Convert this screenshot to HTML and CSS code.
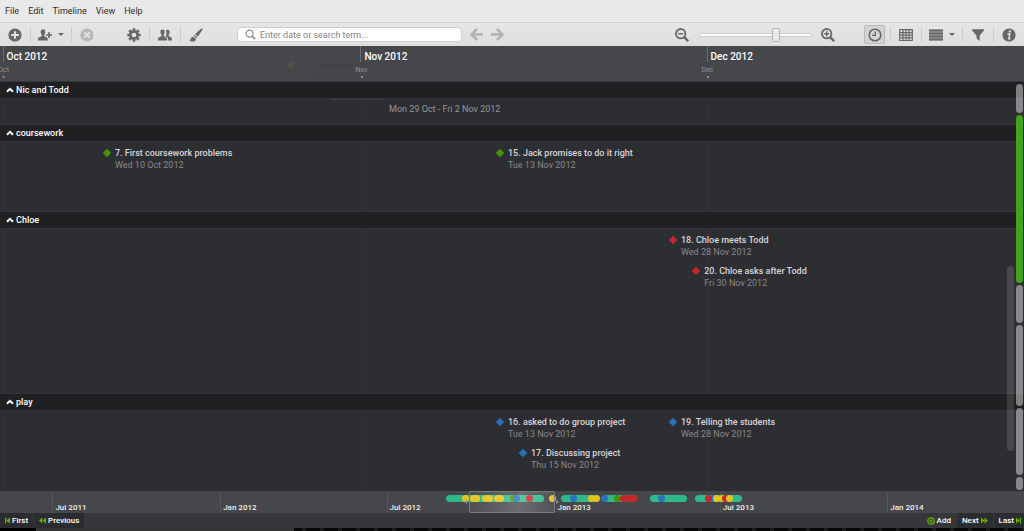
FILE: index.html
```html
<!DOCTYPE html>
<html lang="en">
<head>
<meta charset="utf-8">
<title>Timeline</title>
<link rel="stylesheet" href="styles.css">
</head>
<body>
<div class="app">
  <nav class="menubar">
    <button class="menu">File</button>
    <button class="menu">Edit</button>
    <button class="menu">Timeline</button>
    <button class="menu">View</button>
    <button class="menu">Help</button>
  </nav>

  <div class="toolbar">
    <div class="tools">
      <button class="tool" aria-label="Add event"><svg class="icon" viewBox="0 0 14 14"><circle cx="7" cy="7" r="6.6" fill="currentColor"/><path d="M7 3.2v7.6M3.2 7h7.6" stroke="#e4e4e4" stroke-width="1.9"/></svg></button>
      <button class="tool tool-wide" aria-label="Add person"><svg class="icon" viewBox="0 0 14 14"><path d="M5 1.2C3.3 1.2 2.6 2.4 2.7 4c.1 1.500.6 2.300 1.100 2.900v1.200L.9 9.400C.2 9.800 0 10.500 0 12.600h9.800c0-2.100-.1-2.800-.8-3.200L6.200 8.100V6.900C6.800 6.300 7.200 5.500 7.300 4 7.400 2.400 6.700 1.200 5 1.200z" fill="currentColor"/><path d="M11 4v6M8 7h6" stroke="currentColor" stroke-width="1.600"/></svg><span class="caret"></span></button>
      <button class="tool tool-off" aria-label="Delete" disabled><svg class="icon" viewBox="0 0 14 14"><circle cx="7" cy="7" r="6.600" fill="currentColor"/><path d="M4.300 4.300l5.400 5.400M9.700 4.300L4.300 9.700" stroke="#e6e6e6" stroke-width="1.700"/></svg></button>
    </div>
    <div class="tools">
      <button class="tool" aria-label="Settings"><svg class="icon" viewBox="0 0 14 14"><circle cx="7" cy="7" r="3.700" fill="none" stroke="currentColor" stroke-width="2.800"/><path d="M7 .3v2.400M7 11.300v2.400M.3 7h2.400M11.300 7h2.400M2.260 2.260l1.700 1.700M10.040 10.040l1.700 1.700M2.260 11.740l1.700-1.700M10.040 3.960l1.700-1.700" stroke="currentColor" stroke-width="2.600"/></svg></button>
      <button class="tool" aria-label="People"><svg class="icon" viewBox="0 0 14 14"><path d="M9.600 1.800c1.500 0 2.200 1 2.100 2.500-.1 1.300-.5 2-1 2.500v1.200l2.200 1.200c.8.400 1.100 1 1.100 3.200h-3.800c0-1.900-.4-2.900-1.400-3.400L7.600 8.300C8.300 7.200 8.500 5.900 8.300 4.300 8.200 3.400 8 2.700 7.600 2.300c.5-.4 1.200-.5 2-.5z" fill="currentColor"/><path d="M4.500 1.400C3 1.400 2.300 2.500 2.400 4c.1 1.400.5 2.200 1 2.800v1.300L.9 9.400C.2 9.800 0 10.500 0 12.600h9.100c0-2.100-.1-2.800-.8-3.200L5.700 8.100V6.800c.5-.6.900-1.400 1-2.800.1-1.500-.7-2.600-2.200-2.600z" fill="currentColor"/></svg></button>
      <button class="tool" aria-label="Appearance"><svg class="icon" viewBox="0 0 14 14"><path d="M12.300.6c.9-.4 1.500.3 1.100 1.100L9 8.600 6 6.300zM5.300 7l3 2.300-.7 1-2.800-2.200zM4.200 8.700l2.900 2.200c-.4 1.700-1.500 2.600-3.300 2.600-1.500 0-2.700-.4-3.600-1.300 1.200-.2 1.500-.7 1.700-1.600.3-1.200 1.100-1.900 2.300-1.900z" fill="currentColor"/></svg></button>
    </div>
    <label class="search">
      <svg class="search-icon" viewBox="0 0 12 12"><circle cx="5" cy="5" r="3.800" fill="none" stroke="#8c8c8c" stroke-width="1.400"/><path d="M7.800 7.800l3.200 3.200" stroke="#8c8c8c" stroke-width="1.900"/></svg>
      <input class="search-input" type="text" placeholder="Enter date or search term..." aria-label="Search">
    </label>
    <div class="history">
      <button class="arrow" aria-label="Back"><svg class="icon-sm" viewBox="0 0 13 13"><path d="M7 1L1.500 6.500 7 12M2 6.500h11" fill="none" stroke="currentColor" stroke-width="2.500"/></svg></button>
      <button class="arrow" aria-label="Forward"><svg class="icon-sm" viewBox="0 0 13 13"><path d="M6 1l5.500 5.500L6 12M11 6.500H0" fill="none" stroke="currentColor" stroke-width="2.500"/></svg></button>
    </div>
    <div class="zoom">
      <button class="zoom-btn" aria-label="Zoom out"><svg class="icon" viewBox="0 0 14 14"><circle cx="5.700" cy="5.700" r="4.700" fill="none" stroke="currentColor" stroke-width="1.800"/><path d="M3.200 5.700h5" stroke="currentColor" stroke-width="1.500"/><path d="M9.200 9.200l4 4" stroke="currentColor" stroke-width="2.400"/></svg></button>
      <input class="slider" type="range" min="0" max="100" value="70" aria-label="Zoom level">
      <button class="zoom-btn" aria-label="Zoom in"><svg class="icon" viewBox="0 0 14 14"><circle cx="5.700" cy="5.700" r="4.700" fill="none" stroke="currentColor" stroke-width="1.800"/><path d="M3.200 5.700h5M5.700 3.200v5" stroke="currentColor" stroke-width="1.500"/><path d="M9.200 9.200l4 4" stroke="currentColor" stroke-width="2.400"/></svg></button>
    </div>
    <div class="views">
      <div class="view-cell"><button class="view-on" aria-label="Timeline view" aria-pressed="true"><svg class="icon" viewBox="0 0 14 14"><circle cx="7" cy="7" r="5.800" fill="none" stroke="currentColor" stroke-width="1.600"/><path d="M7.300 3.600v3.800H4" fill="none" stroke="currentColor" stroke-width="1.300"/></svg></button></div>
      <button class="tool" aria-label="Table view"><svg class="icon" viewBox="0 0 14 14"><path d="M.7 1.700h12.600v10.800H.7zM.7 4.600h12.600M.7 7.200h12.600M.7 9.900h12.600M4 2v10.500M7 2v10.500M10 2v10.500" fill="none" stroke="currentColor" stroke-width="1.200"/></svg></button>
      <button class="tool tool-wide" aria-label="Row density"><svg class="icon" viewBox="0 0 14 14"><path d="M0 1.500h14v11H0z" fill="#a4a4a4"/><path d="M0 2.500h14M0 5.500h14M0 8.500h14M0 11.500h14" stroke="currentColor" stroke-width="2"/></svg><span class="caret"></span></button>
      <button class="tool" aria-label="Filter"><svg class="icon" viewBox="0 0 14 14"><path d="M1 1.300h12v1.300L8.700 7.400v5.500L5.500 10.300V7.400L1 2.600z" fill="currentColor"/></svg></button>
      <button class="tool" aria-label="Information"><svg class="icon" viewBox="0 0 14 14"><circle cx="7" cy="7" r="6.600" fill="currentColor"/><circle cx="7.900" cy="3.500" r="1.150" fill="#e4e4e4"/><path d="M5.500 6h2.300l-1 4.700h1.500" fill="none" stroke="#e4e4e4" stroke-width="1.400"/></svg></button>
    </div>
  </div>

  <header class="scale">
    <div class="mark" style="left:0.25%"><span class="mark-title">Oct 2012</span><span class="tick">Oct</span></div>
    <div class="mark" style="left:35.2%"><span class="mark-title">Nov 2012</span><span class="tick">Nov</span></div>
    <div class="mark" style="left:69%"><span class="mark-title">Dec 2012</span><span class="tick">Dec</span></div>
    <div class="event faded" style="left:28.03%"><i class="gem yellow"></i><span class="name">12. announcement</span><span class="date">Fri 26 Oct 2012</span></div>
  </header>

  <main class="lanes">
    <div class="grid-line" style="left:0.3%"></div>
    <div class="grid-line" style="left:35.25%"></div>
    <div class="grid-line" style="left:69.04%"></div>

    <section class="lane lane-1">
      <button class="lane-head"><svg class="chevron" viewBox="0 0 8 6"><path d="M1 4.800L4 1.900l3 2.900" fill="none" stroke="#fff" stroke-width="1.900"/></svg>Nic and Todd</button>
      <div class="canvas">
        <span class="span-bar"></span>
        <div class="span-date">Mon 29 Oct - Fri 2 Nov 2012</div>
      </div>
    </section>
    <section class="lane lane-2">
      <button class="lane-head"><svg class="chevron" viewBox="0 0 8 6"><path d="M1 4.800L4 1.900l3 2.900" fill="none" stroke="#fff" stroke-width="1.900"/></svg>coursework</button>
      <div class="canvas">
        <div class="event" style="left:10.05%"><i class="gem green"></i><span class="name">7. First coursework problems</span><span class="date">Wed 10 Oct 2012</span></div>
        <div class="event" style="left:48.43%"><i class="gem green"></i><span class="name">15. Jack promises to do it right</span><span class="date">Tue 13 Nov 2012</span></div>
      </div>
    </section>
    <section class="lane lane-3">
      <button class="lane-head"><svg class="chevron" viewBox="0 0 8 6"><path d="M1 4.800L4 1.900l3 2.900" fill="none" stroke="#fff" stroke-width="1.900"/></svg>Chloe</button>
      <div class="canvas">
        <div class="event" style="left:65.33%"><i class="gem red"></i><span class="name">18. Chloe meets Todd</span><span class="date">Wed 28 Nov 2012</span></div>
        <div class="event row-2" style="left:67.6%"><i class="gem red"></i><span class="name">20. Chloe asks after Todd</span><span class="date">Fri 30 Nov 2012</span></div>
      </div>
    </section>
    <section class="lane lane-4">
      <button class="lane-head"><svg class="chevron" viewBox="0 0 8 6"><path d="M1 4.800L4 1.900l3 2.900" fill="none" stroke="#fff" stroke-width="1.900"/></svg>play</button>
      <div class="canvas">
        <div class="event" style="left:48.43%"><i class="gem blue"></i><span class="name">16. asked to do group project</span><span class="date">Tue 13 Nov 2012</span></div>
        <div class="event" style="left:65.33%"><i class="gem blue"></i><span class="name">19. Telling the students</span><span class="date">Wed 28 Nov 2012</span></div>
        <div class="event row-2" style="left:50.68%"><i class="gem blue"></i><span class="name">17. Discussing project</span><span class="date">Thu 15 Nov 2012</span></div>
      </div>
    </section>

    <div class="scroll-thumb"></div>
    <div class="lane-map">
      <i class="seg" style="flex-grow:29"></i>
      <i class="seg seg-on" style="flex-grow:168"></i>
      <i class="seg" style="flex-grow:38"></i>
      <i class="seg" style="flex-grow:81"></i>
      <i class="seg" style="flex-grow:67"></i>
      <i class="seg" style="flex-grow:13"></i>
    </div>
  </main>

  <div class="overview">
    <div class="period" style="left:5.12%">Jul 2011</div>
    <div class="period" style="left:21.5%">Jan 2012</div>
    <div class="period" style="left:37.75%">Jul 2012</div>
    <div class="period" style="left:54.15%">Jan 2013</div>
    <div class="period" style="left:70.3%">Jul 2013</div>
    <div class="period" style="left:86.65%">Jan 2014</div>

    <i class="bar" style="left:43.55%;width:9.6%"></i>
    <i class="bar" style="left:54.8%;width:3.6%"></i>
    <i class="bar" style="left:59%;width:3%"></i>
    <i class="bar" style="left:63.48%;width:3.65%"></i>
    <i class="bar" style="left:67.85%;width:4.6%"></i>
    <i class="dot yellow" style="left:45.4%"></i>
    <i class="dot yellow" style="left:46.2%"></i>
    <i class="dot yellow" style="left:46.45%"></i>
    <i class="dot yellow" style="left:47.4%"></i>
    <i class="dot yellow" style="left:47.8%"></i>
    <i class="dot yellow" style="left:48.5%"></i>
    <i class="dot yellow" style="left:48.85%"></i>
    <i class="dot green" style="left:50.05%"></i>
    <i class="dot blue" style="left:50.39%"></i>
    <i class="dot red" style="left:51.66%"></i>
    <i class="dot yellow" style="left:53.95%"></i>
    <i class="dot blue" style="left:55.96%"></i>
    <i class="dot yellow" style="left:57.75%"></i>
    <i class="dot yellow" style="left:58.2%"></i>
    <i class="dot blue" style="left:59.03%"></i>
    <i class="dot green" style="left:60.3%"></i>
    <i class="dot red" style="left:60.85%"></i>
    <i class="dot red" style="left:61.2%"></i>
    <i class="dot red" style="left:61.6%"></i>
    <i class="dot red" style="left:61.95%"></i>
    <i class="dot blue" style="left:64.55%"></i>
    <i class="dot blue" style="left:69.5%"></i>
    <i class="dot red" style="left:69.1%"></i>
    <i class="dot yellow" style="left:70.55%"></i>
    <i class="dot yellow" style="left:69.9%"></i>
    <i class="dot red" style="left:70.8%"></i>
    <i class="dot yellow" style="left:71.15%"></i>
    <div class="viewport" style="left:45.8%;width:8.4%"></div>
    <i class="grip grip-left" style="left:45.3%"></i>
    <i class="grip grip-right" style="left:54.3%"></i>
  </div>

  <footer class="footer">
    <button class="nav-btn"><svg class="nav-icon nav-icon-end" viewBox="0 0 5 7"><path d="M0 .5h1.300v6H0zM5 .5v6L1.300 3.500z" fill="#62b000"/></svg>First</button>
    <button class="nav-btn"><svg class="nav-icon" viewBox="0 0 7 7"><path d="M3.300.5v6L0 3.500zM7 .5v6L3.500 3.500z" fill="#62b000"/></svg>Previous</button>
    <button class="nav-btn add"><svg class="add-icon" viewBox="0 0 8 8"><circle cx="4" cy="4" r="3.200" fill="none" stroke="#62b000" stroke-width="1.300"/><path d="M4 2.200v3.600M2.200 4h3.600" stroke="#62b000" stroke-width="1"/></svg>Add</button>
    <button class="nav-btn">Next<svg class="nav-icon" viewBox="0 0 7 7"><path d="M0 .5v6l3.500-3zM3.500.5v6L7 3.500z" fill="#62b000"/></svg></button>
    <button class="nav-btn last">Last<svg class="nav-icon nav-icon-end" viewBox="0 0 5 7"><path d="M0 .5v6l3.700-3zM3.700.5H5v6H3.700z" fill="#62b000"/></svg></button>
  </footer>
  <div class="edge"></div>
</div>
</body>
</html>
```

FILE: styles.css
```css
* { box-sizing: border-box; }

body {
  margin: 0;
  font-family: Roboto, "Liberation Sans", sans-serif;
  font-size: 9px;
  color: #e6e6e6;
  background: #2d2e32;
}

button {
  margin: 0;
  padding: 0;
  border: 0;
  background: none;
  color: inherit;
  font: inherit;
}

svg { display: block; flex: none; }

.app {
  display: flex;
  flex-direction: column;
  min-height: 100vh;
  overflow: hidden;
}

/* Menu bar */
.menubar {
  display: flex;
  gap: 9px;
  height: 22px;
  padding: 0 5px;
  background: #e9e9e9;
  color: #2c2c2c;
}
.menu { line-height: 21px; }

/* Toolbar */
.toolbar {
  display: flex;
  align-items: center;
  height: 24px;
  border-top: 1px solid #d0d0d0;
  background: linear-gradient(#e6e6e6, #dedede);
  color: #686868;
}
.tools { display: flex; align-items: center; margin-right: 17px; }
.tool {
  display: flex;
  align-items: center;
  justify-content: center;
  gap: 6px;
  width: 30px;
  height: 15px;
}
.tool + .tool, .view-cell + .tool { width: 31px; border-left: 1px solid #c3ced3; }
.tool-off { color: #b9b9b9; }
.icon { width: 14px; height: 14px; }
.icon-sm { width: 13px; height: 13px; }
.caret {
  border: 3px solid transparent;
  border-top-color: #5d6870;
  border-bottom: 0;
}
.tool.tool-wide { width: 41px; }

.search {
  display: flex;
  align-items: center;
  gap: 4px;
  flex: 0 1 225px;
  height: 15px;
  margin-left: 9px;
  padding: 0 7px;
  border: 1px solid #cfcfcf;
  border-radius: 4px;
  background: #fff;
}
.search-icon { width: 11px; height: 11px; }
.search-input {
  flex: 1;
  min-width: 0;
  padding: 0;
  border: 0;
  outline: 0;
  background: none;
  font: inherit;
  color: #555;
}
.search-input::placeholder { color: #858585; opacity: 1; }

.history { display: flex; gap: 8px; margin-left: 8px; color: #b2b2b2; }

.zoom { display: flex; align-items: center; gap: 9px; margin-left: auto; }
.zoom-btn:first-child { margin-right: 1px; }
.slider {
  width: 113px;
  height: 14px;
  margin: 0;
  appearance: none;
  background: none;
}
.slider::-webkit-slider-runnable-track {
  height: 4px;
  border: 1px solid #cdcdcd;
  border-radius: 2px;
  background: #fff;
}
.slider::-webkit-slider-thumb {
  appearance: none;
  width: 8px;
  height: 14px;
  margin-top: -6px;
  border: 1px solid #b5b5b5;
  border-radius: 2px;
  background: #e9e9e9;
}

.views { display: flex; align-items: center; margin-left: 30px; }
.zoom + .views { margin-left: 29px; }
.view-cell { padding-right: 5px; }
.view-on {
  display: flex;
  align-items: center;
  justify-content: center;
  width: 21px;
  height: 19px;
  border: 1px solid #b9b9b9;
  border-radius: 2px;
  background: #d3d3d3;
}

/* Date scale */
.scale {
  position: relative;
  height: 36px;
  border-bottom: 1px solid #36373d;
  background: #46474b;
}
.mark {
  position: absolute;
  top: 0;
  height: 16px;
  border-left: 1px solid #6b6c70;
}
.mark-title {
  display: block;
  padding-left: 3px;
  font-size: 10px;
  font-weight: 500;
  line-height: 21px;
  color: #fff;
  white-space: nowrap;
}
.tick {
  position: absolute;
  top: 19px;
  left: 0;
  transform: translateX(-50%);
  font-size: 7px;
  line-height: 10px;
  color: #929397;
}
.tick::after {
  content: "";
  display: block;
  width: 2px;
  height: 2px;
  margin: 1px auto 0;
  background: #929397;
}

/* Lanes */
.lanes {
  position: relative;
  display: flex;
  flex-direction: column;
  flex: 1;
}
.grid-line {
  position: absolute;
  top: 0;
  bottom: 0;
  width: 1px;
  background: #323337;
}
.lane { display: flex; flex-direction: column; }
.lane-1 { min-height: 43px; }
.lane-2 { min-height: 87px; }
.lane-3 { min-height: 182px; flex: 1; }
.lane-4 { min-height: 97px; }
.lane-head {
  position: relative;
  display: flex;
  align-items: center;
  gap: 2px;
  height: 17px;
  padding: 0 6px;
  border-bottom: 1px solid #34353a;
  background: #1f2022;
  font-weight: 500;
  color: #fff;
}
.chevron { width: 8px; height: 6px; }
.canvas {
  position: relative;
  flex: 1;
  border-bottom: 1px solid #34353a;
}
.lane-4 .canvas { border-bottom: 0; }

.event {
  position: absolute;
  top: 4px;
  display: grid;
  grid-template-columns: 8px auto;
  column-gap: 4px;
  align-items: center;
  white-space: nowrap;
}
.event.row-2 { top: 35px; }
.gem {
  width: 6px;
  height: 6px;
  margin-left: 1px;
  transform: rotate(45deg);
}
.name {
  font-size: 9px;
  font-weight: 500;
  line-height: 14px;
  color: #d8d5da;
}
.date {
  grid-column: 2;
  line-height: 11px;
  color: #8b888e;
}
.faded { top: 12px; opacity: 0.08; }
.faded .name, .faded .date { color: #15161a; }

.green { background: #459406; }
.red { background: #c3272b; }
.blue { background: #2a70bd; }
.yellow { background: #e3c41f; }

.span-bar {
  position: absolute;
  top: 0;
  left: 32.3%;
  width: 5%;
  height: 1px;
  background: #3e3f38;
}
.span-date {
  padding-left: 38%;
  line-height: 20px;
  color: #98949b;
}

.scroll-thumb {
  position: absolute;
  top: 45%;
  right: 10px;
  bottom: 40px;
  width: 7px;
  border-radius: 4px;
  background: rgba(255, 255, 255, 0.13);
}
.lane-map {
  position: absolute;
  top: 2px;
  right: 1px;
  bottom: 1px;
  display: flex;
  flex-direction: column;
  gap: 2px;
  width: 7px;
}
.seg {
  flex-basis: 0;
  border-radius: 4px;
  background: rgba(255, 255, 255, 0.43);
}
.seg-on { background: #44a11c; }

/* Overview */
.overview {
  position: relative;
  height: 22px;
  background: #46474b;
}
.period {
  position: absolute;
  top: 1px;
  bottom: 0;
  padding: 8px 0 0 2px;
  border-left: 1px solid #55565a;
  font-size: 8px;
  font-weight: 500;
  line-height: 15px;
  color: #f0f0f0;
  white-space: nowrap;
}
.bar {
  position: absolute;
  top: 4px;
  height: 7px;
  border-radius: 4px;
  background: #2fb98a;
}
.dot {
  position: absolute;
  top: 4px;
  width: 7px;
  height: 7px;
  margin-left: -3px;
  border-radius: 50%;
}
.viewport {
  position: absolute;
  top: 0;
  bottom: 0;
  border: 1px solid #797b7f;
  border-radius: 2px;
  background: linear-gradient(100deg, rgba(255, 255, 255, 0.04), rgba(255, 255, 255, 0.2) 60%, rgba(255, 255, 255, 0.06));
}
.grip {
  position: absolute;
  top: 9px;
  border: 2px solid transparent;
}
.grip-left { border-right: 3px solid #8b8c8f; border-left: 0; }
.grip-right { border-left: 3px solid #8b8c8f; border-right: 0; }

/* Footer */
.footer {
  display: flex;
  gap: 1px;
  height: 15px;
  background: #36373b;
}
.nav-btn {
  display: flex;
  align-items: center;
  gap: 2px;
  padding: 0 5px;
  background: #2b2c30;
  font-size: 8px;
  font-weight: 500;
  color: #fff;
}
.nav-icon { width: 7px; height: 7px; }
.nav-icon-end { width: 5px; }
.add-icon { width: 8px; height: 8px; }
.nav-btn.add { margin-left: auto; background: none; }
.nav-btn.last { padding-right: 3px; }
.edge {
  height: 3px;
  background: linear-gradient(90deg, #000 36px, #343537 36px, #343537 294px, transparent 294px), repeating-linear-gradient(90deg, #070707 0 14px, #1c1c1c 14px 18px);
}
```
